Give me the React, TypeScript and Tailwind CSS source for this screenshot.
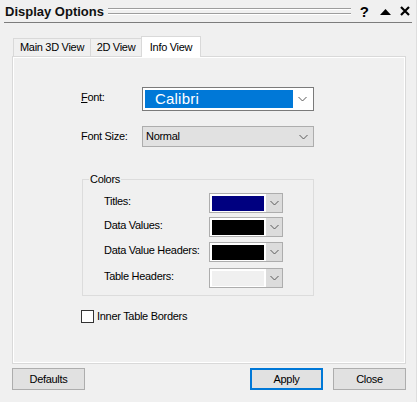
import React from 'react';

function Chevron() {
  return (
    <svg width="9" height="6" viewBox="0 0 9 6" className="shrink-0">
      <path d="M0.5 1 L4.5 5 L8.5 1" fill="none" stroke="#5a5a5a" strokeWidth="1" />
    </svg>
  );
}

function ColorCombo({ color }: { color: string }) {
  return (
    <div className="flex h-[20px] w-[74px] border border-[#adadad] bg-white">
      <div className="mx-[2px] mb-[1px] mt-[2px] flex-1" style={{ background: color }} />
      <div className="flex w-[16px] items-center justify-center bg-[#dcdcdc]">
        <Chevron />
      </div>
    </div>
  );
}

const colorRows = [
  { label: 'Titles:', color: '#000080', mt: 'mt-0' },
  { label: 'Data Values:', color: '#000000', mt: 'mt-[4px]' },
  { label: 'Data Value Headers:', color: '#000000', mt: 'mt-[5px]' },
  { label: 'Table Headers:', color: '#f0f0f0', mt: 'mt-[6px]' },
];

export default function App() {
  return (
    <div className="h-[402px] w-[417px] overflow-hidden border-r border-[#dedede] bg-[#f0f0f0] font-['Liberation_Sans',Arial,sans-serif] text-[11px] tracking-[-0.3px] text-black">
      {/* title bar */}
      <div className="flex h-[22px] items-center pl-[5px] pr-[6px]">
        <span className="text-[13px] font-bold leading-none tracking-normal text-[#111]">Display Options</span>
        <div className="ml-[4px] mr-[9px] flex h-[7px] flex-1 flex-col justify-between">
          <div className="h-[2px] border-t border-[#9d9d9d] bg-white" />
          <div className="h-[2px] border-t border-[#9d9d9d] bg-white" />
        </div>
        <span className="mr-[11px] text-[15px] font-bold leading-none tracking-normal">?</span>
        <svg width="11" height="6" viewBox="0 0 11 6" className="mr-[9px] mt-[1px]">
          <path d="M5.5 0 L11 6 L0 6 Z" fill="#000" />
        </svg>
        <svg width="10" height="10" viewBox="0 0 10 10">
          <path d="M1 1 L9 9 M9 1 L1 9" stroke="#000" strokeWidth="2.2" />
        </svg>
      </div>
      <div className="mx-[4px] h-px bg-[#7c7c7c]" />

      {/* tabs */}
      <div className="ml-[13px] mt-[13px] flex h-[20px] items-end">
        <div className="flex h-[18px] w-[77px] items-center justify-center border-l border-t border-[#d9d9d9]">Main 3D View</div>
        <div className="flex h-[18px] w-[51px] items-center justify-center border-l border-t border-[#d9d9d9]">2D View</div>
        <div className="relative z-10 -mb-px flex h-[21px] w-[60px] items-start justify-center border-x border-t border-[#d9d9d9] bg-white pt-[2px]">Info View</div>
      </div>

      {/* tab page */}
      <div className="mx-[12px] h-[308px] w-[394px] border border-[#d9d9d9] pl-[68px] pt-[30px] shadow-[inset_0_0_0_1px_#ffffff]">
        <div className="flex h-[24px] items-center">
          <span className="-mt-[3px] w-[61px]">
            <span className="underline">F</span>ont:
          </span>
          <div className="flex h-[24px] w-[172px] border border-[#7a7a7a] bg-white p-[2px]">
            <div className="flex flex-1 items-center bg-[#0078d7] pl-[10px] text-[15px] tracking-[0.2px] text-white">Calibri</div>
            <div className="flex w-[18px] items-center justify-center">
              <Chevron />
            </div>
          </div>
        </div>

        <div className="mt-[15px] flex h-[21px] items-center">
          <span className="w-[61px]">Font Size:</span>
          <div className="flex h-[21px] w-[172px] items-center border border-[#adadad] bg-[#e1e1e1] pl-[3px] pr-[5px]">
            <span className="flex-1">Normal</span>
            <Chevron />
          </div>
        </div>

        <div className="relative ml-px mt-[32px] h-[117px] w-[232px] border border-[#dcdcdc] pl-[21px] pt-[13px]">
          <span className="absolute -top-[8px] left-[6px] bg-[#f0f0f0] px-px leading-[14px]">Colors</span>
          {colorRows.map((r) => (
            <div key={r.label} className={`flex h-[20px] items-center ${r.mt}`}>
              <span className="-mt-[4px] w-[105px]">{r.label}</span>
              <ColorCombo color={r.color} />
            </div>
          ))}
        </div>

        <div className="mt-[12px] flex items-center">
          <div className="h-[13px] w-[13px] border border-[#333] bg-white" />
          <span className="ml-[3px]">Inner Table Borders</span>
        </div>
      </div>

      {/* buttons */}
      <div className="mx-[12px] mt-[4px] flex w-[394px] justify-between">
        <button className="h-[22px] w-[73px] border border-[#adadad] bg-[#e1e1e1]">Defaults</button>
        <div className="flex gap-[10px]">
          <button className="h-[22px] w-[73px] border-2 border-[#0078d7] bg-[#e1e1e1]">Apply</button>
          <button className="h-[22px] w-[73px] border border-[#adadad] bg-[#e1e1e1]">Close</button>
        </div>
      </div>
    </div>
  );
}
